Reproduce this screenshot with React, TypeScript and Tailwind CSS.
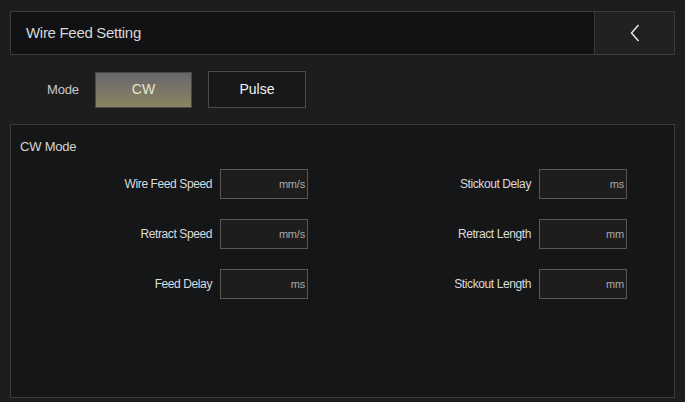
export default function App() {
  const left = [
    { label: "Wire Feed Speed", unit: "mm/s" },
    { label: "Retract Speed", unit: "mm/s" },
    { label: "Feed Delay", unit: "ms" },
  ];
  const right = [
    { label: "Stickout Delay", unit: "ms" },
    { label: "Retract Length", unit: "mm" },
    { label: "Stickout Length", unit: "mm" },
  ];

  const Field = ({ label, unit }: { label: string; unit: string }) => (
    <div className="flex items-center justify-end gap-[8px] h-[30px]">
      <span className="text-[12px] tracking-[-0.4px] text-[#dcdcdc]">{label}</span>
      <div className="w-[88px] h-[30px] border border-[#5a5654] bg-[#1f1d1c] flex items-center justify-end pr-[2px]">
        <span className="text-[11px] tracking-[-0.2px] text-[#a9a9a9]">{unit}</span>
      </div>
    </div>
  );

  return (
    <div
      className="w-[685px] h-[402px] bg-[#1d1d1e] px-[10px] pt-[11px] overflow-hidden"
      style={{ fontFamily: '"Liberation Sans", Arial, sans-serif' }}
    >
      <div className="flex h-[44px] border border-[#3a3b3d] bg-[#111214]">
        <div className="flex-1 flex items-center pl-[15px] text-[15px] tracking-[-0.3px] text-[#d6d6d6]">
          Wire Feed Setting
        </div>
        <div className="w-[80px] border-l border-[#3a3b3d] bg-[#1f2123] flex items-center justify-center">
          <svg width="14" height="20" viewBox="0 0 14 20" fill="none">
            <path d="M10.5 2 L3.5 10 L10.5 18" stroke="#eeeeee" strokeWidth="1.4" />
          </svg>
        </div>
      </div>

      <div className="flex items-center mt-[16px] h-[37px]">
        <span className="ml-[37px] w-[48px] text-[13px] tracking-[-0.2px] text-[#c8c8c8]">Mode</span>
        <button className="w-[97px] h-[36px] border border-[#4a4a44] bg-gradient-to-b from-[#67676a] to-[#8b8462] text-[14px] text-[#ebe6c9]">
          CW
        </button>
        <button className="ml-[16px] w-[98px] h-[37px] border border-[#4a4b4d] bg-[#17181a] text-[14px] text-[#f0f0f0]">
          Pulse
        </button>
      </div>

      <div className="mt-[16px] h-[274px] border border-[#3a3b3d] bg-[#151618] pt-[13px]">
        <div className="pl-[9px] text-[13px] leading-[18px] tracking-[-0.2px] text-[#d4d4d4]">CW Mode</div>
        <div className="flex mt-[13px]">
          <div className="w-[297px] flex flex-col gap-[20px]">
            {left.map((f) => (
              <Field key={f.label} {...f} />
            ))}
          </div>
          <div className="w-[319px] flex flex-col gap-[20px]">
            {right.map((f) => (
              <Field key={f.label} {...f} />
            ))}
          </div>
        </div>
      </div>
    </div>
  );
}
